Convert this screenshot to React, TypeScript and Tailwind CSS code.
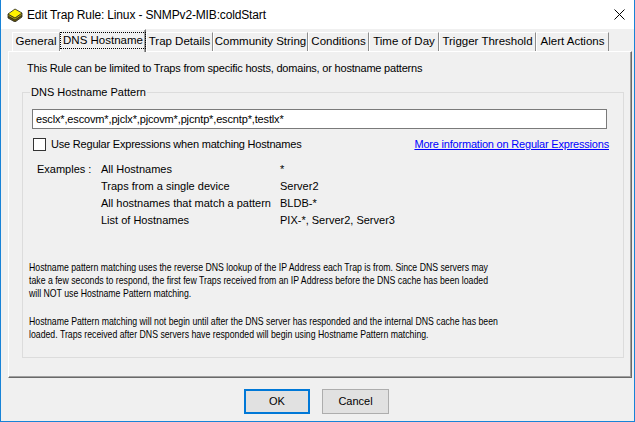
import React from "react";

const tabs = [
  { label: "General", w: 48 },
  { label: "DNS Hostname", w: 86, selected: true },
  { label: "Trap Details", w: 67 },
  { label: "Community String", w: 95 },
  { label: "Conditions", w: 61 },
  { label: "Time of Day", w: 70 },
  { label: "Trigger Threshold", w: 97 },
  { label: "Alert Actions", w: 73 },
];

function AppIcon() {
  return (
    <svg width="16" height="14" viewBox="0 0 16 14">
      <polygon points="1,8 8,12 15,7 15,9 8,14 1,10" fill="#6b5a00" stroke="#222" strokeWidth="0.8" />
      <polygon points="1,6 8,10 15,5 15,7 8,12 1,8" fill="#c9b400" stroke="#222" strokeWidth="0.8" />
      <polygon points="1,6 8,1 15,5 8,10" fill="#fff200" stroke="#222" strokeWidth="0.8" />
    </svg>
  );
}

export default function App() {
  return (
    <div
      className="w-[635px] h-[422px] bg-[#f0f0f0] border-l border-r border-b border-[#1883d7] flex flex-col overflow-hidden text-[11px] text-black"
      style={{ fontFamily: '"Liberation Sans", Arial, sans-serif' }}
    >
      {/* Title bar */}
      <div className="h-[29px] bg-white flex items-center shrink-0">
        <div className="ml-[6px] flex items-center">
          <AppIcon />
        </div>
        <span className="ml-[4px] text-[12px] leading-none tracking-[-0.15px]">Edit Trap Rule: Linux - SNMPv2-MIB:coldStart</span>
        <svg className="ml-auto mr-[9px]" width="11" height="11" viewBox="0 0 11 11">
          <path d="M0.5 0.5 L10.5 10.5 M10.5 0.5 L0.5 10.5" stroke="#000" strokeWidth="1" />
        </svg>
      </div>

      {/* Tabs */}
      <div className="h-[22px] flex items-end pl-[11px] shrink-0 relative z-10">
        {tabs.map((t) =>
          t.selected ? (
            <div
              key={t.label}
              style={{ width: t.w }}
              className="h-[23px] -mb-px bg-[#f0f0f0] border-l border-t border-white border-r border-r-[#696969] shadow-[inset_-1px_0_0_#a0a0a0] flex items-start justify-center pt-[2px] shrink-0 whitespace-nowrap"
            >
              <span className="border border-dotted border-black px-[2px] leading-[15px] text-[11.5px]">
                {t.label}
              </span>
            </div>
          ) : (
            <div
              key={t.label}
              style={{ width: t.w }}
              className="h-[19px] border-l border-t border-white border-r border-r-[#8c8c8c] flex items-center justify-center text-[11.5px] shrink-0 whitespace-nowrap"
            >
              {t.label}
            </div>
          )
        )}
      </div>

      {/* Panel */}
      <div className="ml-[7px] mr-[2px] h-[327px] border-l border-t border-white border-r border-b border-r-[#696969] border-b-[#696969] shadow-[inset_-1px_-1px_0_#a0a0a0] flex flex-col shrink-0 min-w-0">
        <p className="ml-[18px] mt-[10px] leading-[13px] tracking-[-0.2px]">
          This Rule can be limited to Traps from specific hosts, domains, or hostname patterns
        </p>

        <fieldset className="ml-[13px] mr-[7px] mt-[11px] border border-[#dcdcdc] pb-[16px] min-w-0 overflow-hidden">
          <legend className="ml-[7px] px-[1px] leading-[13px]">DNS Hostname Pattern</legend>

          <div className="ml-[9px] mt-[10px] w-[575px] h-[20px] bg-white border border-[#7a7a7a] flex items-center pl-[3px] tracking-[-0.15px]">
            esclx*,escovm*,pjclx*,pjcovm*,pjcntp*,escntp*,testlx*
          </div>

          <div className="mt-[9px] h-[13px] flex items-center">
            <div className="ml-[10px] w-[13px] h-[13px] bg-white border border-[#333]" />
            <span className="ml-[5px] leading-[13px] tracking-[-0.2px]">Use Regular Expressions when matching Hostnames</span>
            <span className="ml-auto mr-[14px] text-[#0000ff] underline leading-[13px] tracking-[-0.2px]">
              More information on Regular Expressions
            </span>
          </div>

          <div className="ml-[14px] mt-[10px] grid grid-cols-[64px_179px_auto] leading-[17px]">
            <span>Examples :</span>
            <span>All Hostnames</span>
            <span>*</span>
            <span />
            <span>Traps from a single device</span>
            <span>Server2</span>
            <span />
            <span>All hostnames that match a pattern</span>
            <span>BLDB-*</span>
            <span />
            <span>List of Hostnames</span>
            <span>PIX-*, Server2, Server3</span>
          </div>

          <p className="ml-[6px] mt-[32px] leading-[13px] whitespace-nowrap origin-left scale-x-[0.793]">
            Hostname pattern matching uses the reverse DNS lookup of the IP Address each Trap is from. Since DNS servers may
            <br />
            take a few seconds to respond, the first few Traps received from an IP Address before the DNS cache has been loaded
            <br />
            will NOT use Hostname Pattern matching.
          </p>
          <p className="ml-[6px] mt-[15px] leading-[13px] whitespace-nowrap origin-left scale-x-[0.793]">
            Hostname Pattern matching will not begin until after the DNS server has responded and the internal DNS cache has been
            <br />
            loaded. Traps received after DNS servers have responded will begin using Hostname Pattern matching.
          </p>
        </fieldset>
      </div>

      {/* Buttons */}
      <div className="flex pl-[243px] pt-[11px] gap-[12px]">
        <button className="w-[66px] h-[25px] bg-[#e1e1e1] border-2 border-[#0078d7] text-[11px] leading-none">
          OK
        </button>
        <button className="w-[67px] h-[25px] bg-[#e1e1e1] border border-[#adadad] text-[11px] leading-none">
          Cancel
        </button>
      </div>
    </div>
  );
}
